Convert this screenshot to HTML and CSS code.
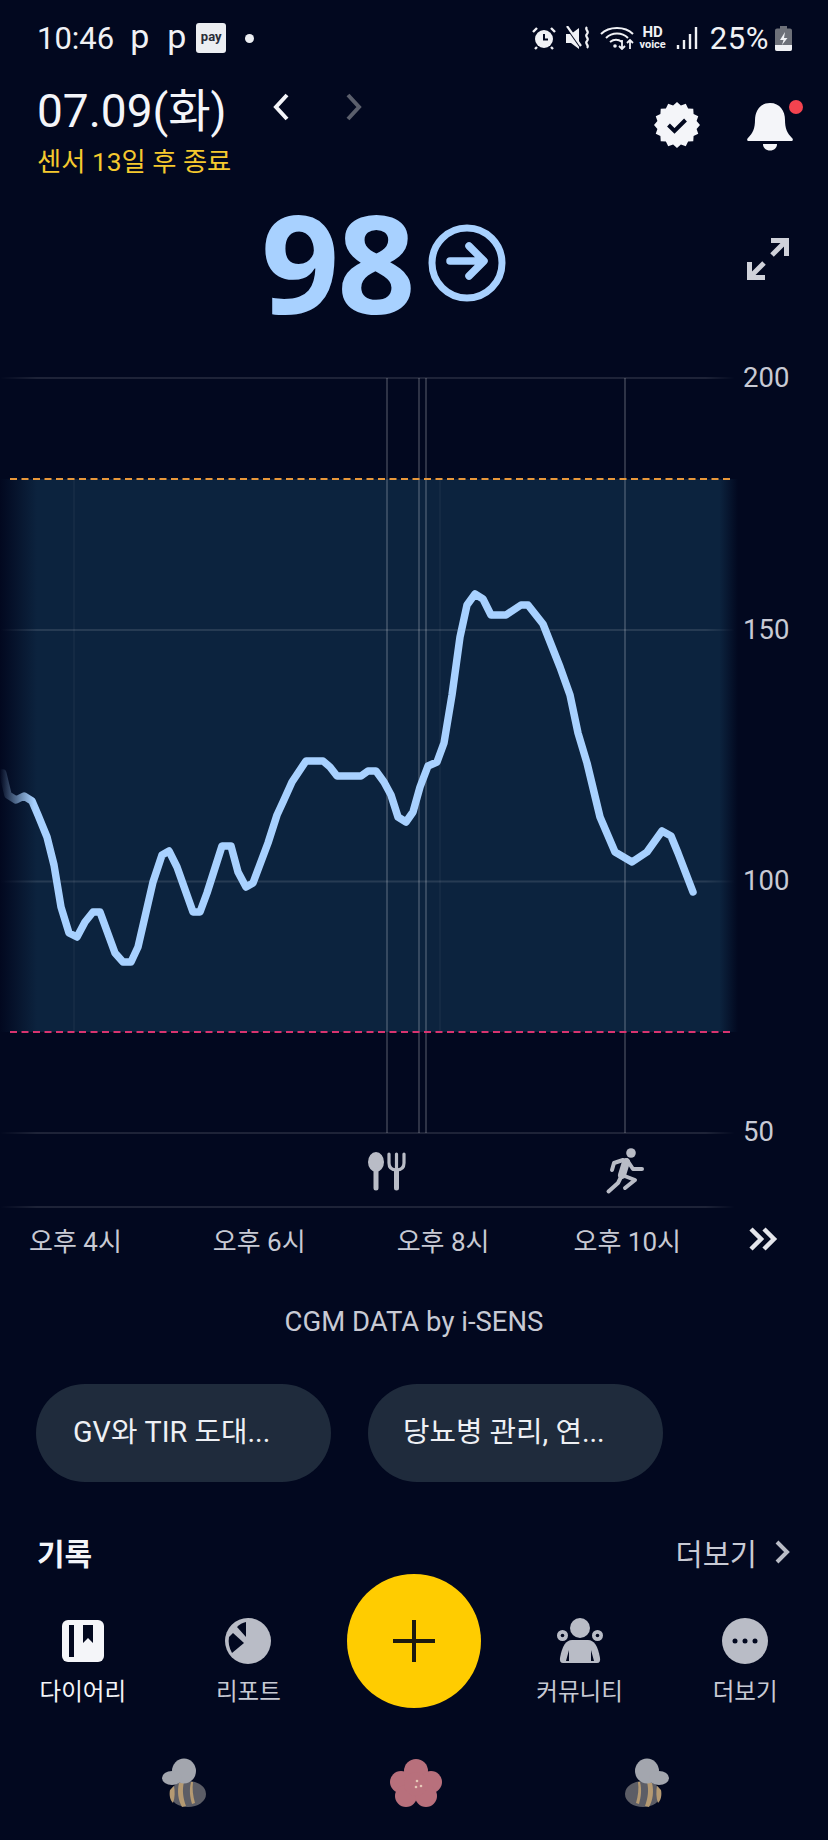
FILE: index.html
```html
<!DOCTYPE html>
<html lang="ko">
<head>
  <meta charset="UTF-8">
  <meta name="viewport" content="width=device-width, initial-scale=1.0">
  <title>CGM</title>
  <link rel="stylesheet" href="styles.css">
</head>
<body>
  <!-- 상태바 -->
  <div class="status-bar">
    <div class="status-left">
      <span class="status-time">10:46</span>
      <span class="status-p">p</span>
      <span class="status-p">p</span>
      <span class="status-pay">pay</span>
      <span class="status-dot"></span>
    </div>
    <div class="status-right">
      <svg class="ico-alarm" width="24" height="24" viewBox="0 0 24 24">
        <circle cx="12" cy="13" r="9" fill="#f0f1f5"/>
        <path d="M12 8v5.500h4" fill="none" stroke="#02081f" stroke-width="2"/>
        <path d="M1 6l4-4M23 6l-4-4M5 21l-2 2M19 21l2 2" stroke="#f0f1f5" stroke-width="2.400" fill="none"/>
      </svg>
      <svg class="ico-mute" width="24" height="24" viewBox="0 0 24 24">
        <path d="M0 8h5l8-6v21l-8-6H0z" fill="#f0f1f5"/>
        <path d="M1 2l14 20" stroke="#02081f" stroke-width="2"/>
        <path d="M1 0l14 20" stroke="#f0f1f5" stroke-width="2.200"/>
        <path d="M21 1c-3 3 3 4 0 7s3 4 0 7s3 4 0 7" fill="none" stroke="#f0f1f5" stroke-width="2.200"/>
      </svg>
      <svg class="ico-wifi" width="34" height="24" viewBox="0 0 34 24">
        <path d="M1 8c8-8 24-8 32 0M6 12c6-6 16-6 22 0M10 16c4-3 8-3 12 0" fill="none" stroke="#f0f1f5" stroke-width="2"/>
        <circle cx="15" cy="20" r="1.800" fill="#f0f1f5"/>
        <path d="M22 14v9m-3-3l3 3l3-3M30 23v-9m-3 3l3-3l3 3" fill="none" stroke="#f0f1f5" stroke-width="1.800"/>
      </svg>
      <span class="status-hd"><b>HD</b><i>voice</i></span>
      <svg class="ico-signal" width="22" height="24" viewBox="0 0 22 24">
        <path d="M2 19v4M8 14v9M14 8v15M20 1v22" stroke="#f0f1f5" stroke-width="2.400"/>
      </svg>
      <span class="status-battery-text">25%</span>
      <svg class="ico-battery" width="17" height="25" viewBox="0 0 17 25">
        <path d="M5 0h7v2.500h3a2 2 0 0 1 2 2V23a2 2 0 0 1-2 2H2a2 2 0 0 1-2-2V4.500a2 2 0 0 1 2-2h3z" fill="#6d7079"/>
        <path d="M0 19h17v4a2 2 0 0 1-2 2H2a2 2 0 0 1-2-2z" fill="#f0f1f5"/>
        <path d="M10 6l-5 8h3.500l-1.500 5l5.500-7H9z" fill="#f0f1f5"/>
      </svg>
    </div>
  </div>

  <!-- 헤더 -->
  <div class="header">
    <div class="header-left">
      <div class="date-row">
        <span class="date-text">07.09(화)</span>
        <svg class="date-arrow" width="16" height="28" viewBox="0 0 16 28"><path d="M14 2L3 14l11 12" fill="none" stroke="#f4f5f9" stroke-width="4"/></svg>
        <svg class="date-arrow" width="16" height="28" viewBox="0 0 16 28"><path d="M2 2l11 12L2 26" fill="none" stroke="#5b5f6c" stroke-width="4"/></svg>
      </div>
      <div class="sensor-text">센서 13일 후 종료</div>
    </div>
    <div class="header-right">
      <svg width="48" height="48" viewBox="0 0 48 48">
        <polygon fill="#f4f5f9" points="24,1 27.900,4.400 32.800,2.750 35.100,7.400 40.260,7.740 40.600,12.900 45.250,15.200 43.600,20.100 47,24 43.600,27.900 45.250,32.800 40.600,35.100 40.260,40.260 35.100,40.600 32.800,45.250 27.900,43.600 24,47 20.100,43.600 15.200,45.250 12.900,40.600 7.740,40.260 7.400,35.100 2.750,32.800 4.400,27.900 1,24 4.400,20.100 2.750,15.200 7.400,12.900 7.740,7.740 12.900,7.400 15.200,2.750 20.100,4.400"/>
        <path d="M15.500 24l6 6l11-11" fill="none" stroke="#02081f" stroke-width="4"/>
      </svg>
      <div class="bell">
        <svg width="48" height="50" viewBox="0 0 48 50">
          <path d="M24 2C14 2 9 10 9 19c0 8-2 13-7 18c-1.500 1.500-1 3 1 3h42c2 0 2.500-1.500 1-3c-5-5-7-10-7-18C39 10 34 2 24 2z" fill="#f4f5f9"/>
          <path d="M17 43h14c0 4-3 6.500-7 6.500s-7-2.500-7-6.500z" fill="#f4f5f9"/>
        </svg>
        <span class="bell-dot"></span>
      </div>
    </div>
  </div>

  <!-- 현재 혈당 -->
  <div class="reading">
    <div class="reading-value">
      <span class="reading-num">98</span>
      <svg width="80" height="80" viewBox="0 0 80 80">
        <circle cx="40" cy="40" r="35" fill="none" stroke="#a8d1ff" stroke-width="7"/>
        <path d="M23 38h33M42 23l15 15l-15 15" fill="none" stroke="#a8d1ff" stroke-width="7.500" stroke-linecap="round" stroke-linejoin="round"/>
      </svg>
    </div>
    <svg class="reading-expand" width="42" height="42" viewBox="0 0 42 42">
      <path d="M40 2L25 17M24 2.500h15.500V18M2 40l15-15M2.500 24v15.500H18" fill="none" stroke="#d0d2da" stroke-width="5"/>
    </svg>
  </div>

  <!-- 그래프 -->
  <svg class="chart" width="828" height="855" viewBox="0 360 828 855">
    <defs>
      <linearGradient id="bandFade" x1="0" y1="0" x2="1" y2="0">
        <stop offset="0" stop-color="#0c233e" stop-opacity="0"/>
        <stop offset="0.05" stop-color="#0c233e"/>
        <stop offset="0.975" stop-color="#0c233e"/>
        <stop offset="1" stop-color="#0c233e" stop-opacity="0"/>
      </linearGradient>
      <linearGradient id="lineFade" gradientUnits="userSpaceOnUse" x1="0" y1="0" x2="34" y2="0">
        <stop offset="0" stop-color="#a8d1ff" stop-opacity="0"/>
        <stop offset="1" stop-color="#a8d1ff"/>
      </linearGradient>
      <linearGradient id="gridFade" gradientUnits="userSpaceOnUse" x1="0" y1="0" x2="735" y2="0">
        <stop offset="0" stop-color="#fff" stop-opacity="0"/>
        <stop offset="0.05" stop-color="#fff" stop-opacity="0.11"/>
        <stop offset="0.96" stop-color="#fff" stop-opacity="0.11"/>
        <stop offset="1" stop-color="#fff" stop-opacity="0"/>
      </linearGradient>
    </defs>
    <rect x="0" y="479" width="738" height="553" fill="url(#bandFade)"/>
    <path class="grid-line" stroke="url(#gridFade)" d="M0 378H735M0 630H735M0 881.500H735M0 1133H735M0 1207H735"/>
    <path class="v-faint" d="M74 479V1032M440 479V1032"/>
    <path class="v-line" d="M387 378V1133M419 378V1133M426 378V1133M625 378V1133"/>
    <path class="limit-high" d="M10 479H733"/>
    <path class="limit-low" d="M10 1032H733"/>
    <polyline class="curve" stroke="url(#lineFade)" points="2.700,773 8,795 16,800 24,796 32,801 38,815 47,837 54,865 61,907 69,933 77,937 85,922 93,912 100,912 115,953 123,962 131,962 138,947 153,882 162,855 169,851 177,867 193,912 200,912 207,893 222,846 231,846 238,872 246,887 253,883 268,843 277,815 283,802 292,782 306,761 323,761 330,767 337,776 361,776 368,771 376,771 384,782 391,795 398,817 406,822 413,812 420,787 428,766 437,762 444,743 452,695 460,637 467,605 475,594 483,599 491,615 506,615 521,605 528,605 543,624 560,667 570,695 578,733 587,763 600,817 615,852 632,862 647,852 662,831 671,836 678,853 693,892"/>
    <text class="axis-label" x="743" y="387">200</text>
    <text class="axis-label" x="743" y="639">150</text>
    <text class="axis-label" x="743" y="890">100</text>
    <text class="axis-label" x="743" y="1141">50</text>
    <!-- 식사 -->
    <ellipse cx="376" cy="1162" rx="8" ry="10" fill="#b9bcc6"/>
    <path class="ico-line" stroke-width="5" d="M376 1170V1188M396.500 1170V1188"/>
    <path class="ico-line" stroke-width="3.200" d="M389 1154v9c0 5 3 7 7.500 7s7.500-2 7.500-7v-9M396.500 1154v14"/>
    <!-- 운동 -->
    <circle cx="631" cy="1153" r="4.800" fill="#b9bcc6"/>
    <path class="ico-line" stroke-width="8" d="M626 1162L622 1175"/>
    <path class="ico-line" stroke-width="4" d="M627 1160L633 1169H642M623 1160L614 1163L612 1170M622 1175L635 1180L625 1188M622 1175L618 1183L608.500 1191.500"/>
  </svg>

  <div class="time-row">
    <span class="time-label">오후 4시</span>
    <span class="time-label">오후 6시</span>
    <span class="time-label">오후 8시</span>
    <span class="time-label">오후 10시</span>
    <svg class="time-more" width="30" height="24" viewBox="0 0 30 24">
      <path d="M3 2l10 10L3 22M16 2l10 10l-10 10" fill="none" stroke="#e4e5eb" stroke-width="4.500"/>
    </svg>
  </div>

  <div class="data-source">CGM DATA by i-SENS</div>

  <div class="chips">
    <div class="chip">GV와 TIR 도대...</div>
    <div class="chip">당뇨병 관리, 연...</div>
  </div>

  <div class="record-head">
    <span class="record-title">기록</span>
    <span class="record-more">더보기
      <svg width="16" height="24" viewBox="0 0 16 24"><path d="M3 2l10 10L3 22" fill="none" stroke="#b9bcc6" stroke-width="4"/></svg>
    </span>
  </div>

  <!-- 하단 메뉴 -->
  <div class="bottom-nav">
    <div class="nav-item nav-active">
      <svg width="46" height="46" viewBox="0 0 46 46">
        <rect x="2" y="2" width="42" height="42" rx="6" fill="#f4f5f9"/>
        <rect x="9" y="7" width="5" height="32" fill="#02081f"/>
        <path d="M23 7h10v18l-5-5l-5 5z" fill="#02081f"/>
      </svg>
      <span>다이어리</span>
    </div>
    <div class="nav-item">
      <svg width="46" height="46" viewBox="0 0 46 46">
        <circle cx="23" cy="23" r="23" fill="#b9bcc6"/>
        <path d="M21 4V19L12 9C14.500 6.500 17.500 4.800 21 4z" fill="#02081f"/>
        <path d="M19 25L7 35C4 30 3 24 4 19L8 15z" fill="#02081f"/>
      </svg>
      <span>리포트</span>
    </div>
    <button class="fab">
      <svg width="42" height="42" viewBox="0 0 42 42"><path d="M0 21h42M21 0v42" stroke="#1c1a10" stroke-width="4"/></svg>
    </button>
    <div class="nav-item">
      <svg width="46" height="46" viewBox="0 0 46 46">
        <circle cx="23" cy="10" r="10" fill="#b9bcc6"/>
        <circle cx="5.500" cy="17.500" r="5.500" fill="#b9bcc6"/>
        <circle cx="5.500" cy="17.500" r="1.800" fill="#02081f"/>
        <circle cx="40.500" cy="17.500" r="5.500" fill="#b9bcc6"/>
        <circle cx="40.500" cy="17.500" r="1.800" fill="#02081f"/>
        <path d="M15 22h16c6 0 10 6 12 18c.5 3-.5 5-3 5H6c-2.500 0-3.500-2-3-5c2-12 6-18 12-18z" fill="#b9bcc6"/>
        <path d="M9 43l3-11v11zM37 43l-3-11v11z" fill="#02081f"/>
      </svg>
      <span>커뮤니티</span>
    </div>
    <div class="nav-item">
      <svg width="46" height="46" viewBox="0 0 46 46">
        <circle cx="23" cy="23" r="23" fill="#b9bcc6"/>
        <circle cx="13" cy="23" r="2.500" fill="#02081f"/>
        <circle cx="23" cy="23" r="2.500" fill="#02081f"/>
        <circle cx="33" cy="23" r="2.500" fill="#02081f"/>
      </svg>
      <span>더보기</span>
    </div>
  </div>

  <!-- 하단 스티커 -->
  <div class="stickers">
    <svg width="44" height="50" viewBox="0 0 44 50">
      <ellipse cx="26" cy="36" rx="18" ry="13" fill="#5c5d66"/>
      <path d="M8 32c-1 5 0 10 3 13c2-5 2-12 1-17z M17 25c-2 8-1 17 3 24l4-1c-3-8-4-16-2-24z M29 24c-2 8-1 15 1 22l3-1c-2-7-3-14-2-21z" fill="#b59a72"/>
      <ellipse cx="22" cy="13" rx="12" ry="12.500" fill="#a3a6ae"/>
      <ellipse cx="10" cy="20" rx="10" ry="7" fill="#a3a6ae"/>
    </svg>
    <svg width="54" height="50" viewBox="0 0 54 50">
      <g fill="#b8707c">
        <circle cx="27" cy="13" r="12"/>
        <circle cx="12" cy="24" r="11"/>
        <circle cx="42" cy="24" r="11"/>
        <circle cx="17" cy="38" r="11"/>
        <circle cx="37" cy="38" r="11"/>
        <circle cx="27" cy="26" r="12"/>
      </g>
      <circle cx="28" cy="23" r="1.300" fill="#e6c9b8"/>
      <circle cx="32" cy="28" r="1.300" fill="#e6c9b8"/>
      <circle cx="27" cy="29" r="1.300" fill="#e6c9b8"/>
    </svg>
    <svg class="flip" width="44" height="50" viewBox="0 0 44 50">
      <ellipse cx="26" cy="36" rx="18" ry="13" fill="#5c5d66"/>
      <path d="M8 32c-1 5 0 10 3 13c2-5 2-12 1-17z M17 25c-2 8-1 17 3 24l4-1c-3-8-4-16-2-24z M29 24c-2 8-1 15 1 22l3-1c-2-7-3-14-2-21z" fill="#b59a72"/>
      <ellipse cx="22" cy="13" rx="12" ry="12.500" fill="#a3a6ae"/>
      <ellipse cx="10" cy="20" rx="10" ry="7" fill="#a3a6ae"/>
    </svg>
  </div>
</body>
</html>
```

FILE: styles.css
```css
* {
  margin: 0;
  padding: 0;
  box-sizing: border-box;
}

body {
  width: 828px;
  height: 1840px;
  overflow: hidden;
  background-color: #02081f;
  font-family: Roboto, "Noto Sans CJK KR", sans-serif;
  color: #c8cad4;
}

svg {
  display: block;
  flex-shrink: 0;
}

/* 상태바 */
.status-bar {
  height: 76px;
  padding: 0 36px 0 37px;
  display: flex;
  justify-content: space-between;
  align-items: center;
  color: #f0f1f5;
}

.status-left,
.status-right {
  display: flex;
  align-items: center;
}

.status-time {
  font-size: 31px;
  margin-right: 16px;
}

.status-p {
  font-size: 34px;
  line-height: 30px;
  margin-right: 19px;
  margin-top: -4px;
  width: 18px;
}

.status-pay {
  width: 30px;
  height: 30px;
  margin-left: -8px;
  border-radius: 3px;
  background-color: #eceef2;
  color: #2a2d38;
  font-size: 13px;
  font-weight: 700;
  line-height: 27px;
  text-align: center;
}

.status-dot {
  width: 9px;
  height: 9px;
  margin-left: 19px;
  border-radius: 50%;
  background-color: #eceef2;
}

.status-right {
  gap: 10px;
}

.ico-wifi {
  margin-right: -4px;
}

.status-hd {
  width: 26px;
  display: flex;
  flex-direction: column;
  align-items: center;
  line-height: 11px;
}

.status-hd b {
  font-size: 15px;
  line-height: 13px;
}

.status-hd i {
  font-size: 11px;
  font-style: normal;
  font-weight: 700;
}

.status-battery-text {
  font-size: 31px;
  letter-spacing: 0.6px;
  margin-left: 2px;
  margin-right: -4px;
}

/* 헤더 */
.header {
  height: 112px;
  padding: 0 34px 0 37px;
  display: flex;
  justify-content: space-between;
}

.date-row {
  display: flex;
  align-items: center;
  height: 62px;
}

.date-text {
  width: 236px;
  font-size: 46px;
  font-weight: 400;
  color: #f4f5f9;
}

.date-arrow + .date-arrow {
  margin-left: 57px;
}

.sensor-text {
  margin-top: 7px;
  font-size: 26.3px;
  line-height: 34px;
  color: #f5c92e;
}

.header-right {
  display: flex;
  gap: 45px;
  padding-top: 25px;
}

.bell {
  position: relative;
  height: 50px;
}

.bell-dot {
  position: absolute;
  top: -1px;
  right: -9px;
  width: 14px;
  height: 14px;
  border-radius: 50%;
  background-color: #f4434f;
}

/* 현재 혈당 */
.reading {
  height: 172px;
  padding-left: 261px;
  display: flex;
  justify-content: space-between;
  align-items: flex-start;
}

.reading-value {
  display: flex;
  align-items: center;
  gap: 13px;
  height: 150px;
}

.reading-num {
  margin-top: -4px;
  font-family: "Noto Sans", sans-serif;
  font-size: 137px;
  font-weight: 700;
  line-height: 150px;
  letter-spacing: -2px;
  color: #a8d1ff;
}

.reading-expand {
  margin: 50px 39px 0 0;
}

/* 그래프 */
.grid-line {
  fill: none;
  stroke-width: 2;
}

.v-line {
  fill: none;
  stroke: rgba(255, 255, 255, 0.24);
  stroke-width: 1.5;
}

.v-faint {
  fill: none;
  stroke: rgba(255, 255, 255, 0.07);
  stroke-width: 1;
}

.limit-high {
  stroke: #e8973a;
  stroke-width: 2;
  stroke-dasharray: 7 4.500;
}

.limit-low {
  stroke: #d8336f;
  stroke-width: 2;
  stroke-dasharray: 7 4.500;
}

.curve {
  fill: none;
  stroke-width: 7.5;
  stroke-linecap: round;
  stroke-linejoin: round;
}

.ico-line {
  fill: none;
  stroke: #b9bcc6;
  stroke-linecap: round;
  stroke-linejoin: round;
}

.axis-label {
  font-family: Roboto, sans-serif;
  font-size: 27.5px;
  fill: #c8cad4;
}

/* 시간 축 */
.time-row {
  height: 48px;
  padding-left: 29px;
  display: flex;
  align-items: center;
  gap: 91px;
}

.time-label {
  font-size: 26px;
  white-space: nowrap;
}

.time-label:nth-child(4) {
  margin-left: -7px;
}

.time-more {
  margin-left: -24px;
}

.data-source {
  margin-top: 41px;
  font-size: 27.5px;
  line-height: 36px;
  text-align: center;
}

/* 칩 */
.chips {
  margin-top: 44px;
  padding-left: 36px;
  display: flex;
  gap: 37px;
}

.chip {
  width: 295px;
  height: 98px;
  padding-left: 37px;
  border-radius: 49px;
  background-color: #1f2b3c;
  color: #eef0f4;
  font-size: 28.8px;
  line-height: 96px;
  white-space: nowrap;
}

.chip + .chip {
  padding-left: 35px;
}

/* 기록 */
.record-head {
  margin-top: 48px;
  height: 44px;
  padding: 0 38px 0 37px;
  display: flex;
  justify-content: space-between;
  align-items: center;
}

.record-title {
  font-size: 30px;
  font-weight: 700;
  color: #f4f5f9;
}

.record-more {
  display: flex;
  align-items: center;
  gap: 17px;
  font-size: 29.5px;
}

/* 하단 메뉴 */
.bottom-nav {
  height: 136px;
  display: grid;
  grid-template-columns: repeat(5, 1fr);
}

.nav-item {
  display: flex;
  flex-direction: column;
  align-items: center;
  padding-top: 44px;
  gap: 11px;
  font-size: 23.5px;
  line-height: 34px;
  white-space: nowrap;
}

.nav-active {
  color: #f4f5f9;
}

.fab {
  justify-self: center;
  width: 134px;
  height: 134px;
  border: none;
  border-radius: 50%;
  background-color: #ffcc00;
  display: flex;
  align-items: center;
  justify-content: center;
}

/* 스티커 */
.stickers {
  margin-top: 48px;
  padding: 0 159px 0 162px;
  display: flex;
  justify-content: space-between;
}

.flip {
  transform: scaleX(-1);
}
```
